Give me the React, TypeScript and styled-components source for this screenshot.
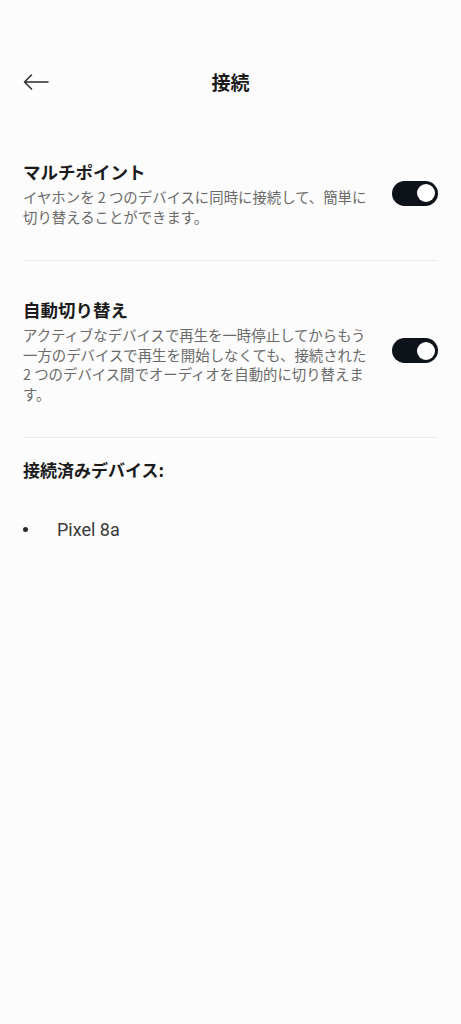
import React, { useState } from "react";
import styled, { createGlobalStyle } from "styled-components";

const GlobalStyle = createGlobalStyle`
  html, body {
    margin: 0;
    padding: 0;
    background: #fcfcfc;
  }
  body {
    font-family: "Noto Sans CJK JP", "Noto Sans", sans-serif;
    color: #1b1b1b;
    -webkit-font-smoothing: antialiased;
  }
`;

const Page = styled.div`
  min-height: 1024px;
  background: #fcfcfc;
`;

const Header = styled.header`
  margin-top: 50px;
  height: 64px;
  display: grid;
  grid-template-columns: 60px 1fr 60px;
  align-items: center;
  padding: 0 23px;
`;

const BackButton = styled.button`
  border: none;
  background: none;
  padding: 0;
  width: 26px;
  height: 18px;
  display: flex;
  align-items: center;
  cursor: pointer;
  color: #2b2b2b;
`;

const Title = styled.h1`
  margin: 0;
  text-align: center;
  font-size: 19px;
  font-weight: 700;
  line-height: 24px;
`;

const Content = styled.main`
  padding: 9px 23px 0;
`;

const Section = styled.section`
  display: flex;
  align-items: center;
  gap: 20px;
  padding: 37px 0 34px;
  border-bottom: 1px solid #ebebeb;
`;

const TextBlock = styled.div`
  flex: 1;
  min-width: 0;
`;

const SettingTitle = styled.h2`
  margin: 0;
  font-size: 17.5px;
  font-weight: 700;
  line-height: 24px;
  color: #1b1b1b;
`;

const Description = styled.p`
  margin: 3px 0 0;
  font-size: 14.4px;
  line-height: 19.5px;
  color: #6a6a6a;
`;

const Track = styled.button<{ $on: boolean }>`
  flex: none;
  width: 46px;
  height: 25px;
  border-radius: 13px;
  border: none;
  padding: 0 3.5px;
  display: flex;
  align-items: center;
  justify-content: ${(p) => (p.$on ? "flex-end" : "flex-start")};
  background: ${(p) => (p.$on ? "#0e131a" : "#c9cbcf")};
  cursor: pointer;
`;

const Knob = styled.span`
  width: 18px;
  height: 18px;
  border-radius: 50%;
  background: #ffffff;
`;

const DevicesTitle = styled.h3`
  margin: 0;
  padding-top: 20px;
  font-size: 17px;
  font-weight: 700;
  line-height: 24px;
  color: #1b1b1b;
`;

const DeviceList = styled.ul`
  list-style: none;
  margin: 0;
  padding: 35px 0 0;
`;

const DeviceItem = styled.li`
  display: flex;
  align-items: center;
  height: 24px;
  font-family: Roboto, "Noto Sans", sans-serif;
  font-size: 18px;
  color: #3a3a3a;

  &::before {
    content: "";
    width: 5px;
    height: 5px;
    border-radius: 50%;
    background: #2b2b2b;
    margin: 0 29px 0 0;
  }
`;

const Toggle = ({ initial }: { initial: boolean }) => {
  const [on, setOn] = useState(initial);
  return (
    <Track role="switch" aria-checked={on} $on={on} onClick={() => setOn(!on)}>
      <Knob />
    </Track>
  );
};

const settings = [
  {
    title: "マルチポイント",
    text: "イヤホンを 2 つのデバイスに同時に接続して、簡単に切り替えることができます。",
  },
  {
    title: "自動切り替え",
    text: "アクティブなデバイスで再生を一時停止してからもう一方のデバイスで再生を開始しなくても、接続された 2 つのデバイス間でオーディオを自動的に切り替えます。",
  },
];

export default function App() {
  return (
    <Page>
      <GlobalStyle />
      <Header>
        <BackButton aria-label="戻る">
          <svg width="26" height="16" viewBox="0 0 26 16" fill="none">
            <path
              d="M25 8H1.5M8.5 1L1.5 8l7 7"
              stroke="currentColor"
              strokeWidth="1.5"
              strokeLinecap="round"
              strokeLinejoin="round"
            />
          </svg>
        </BackButton>
        <Title>接続</Title>
        <span />
      </Header>
      <Content>
        {settings.map((s) => (
          <Section key={s.title}>
            <TextBlock>
              <SettingTitle>{s.title}</SettingTitle>
              <Description>{s.text}</Description>
            </TextBlock>
            <Toggle initial={true} />
          </Section>
        ))}
        <DevicesTitle>接続済みデバイス:</DevicesTitle>
        <DeviceList>
          <DeviceItem>Pixel 8a</DeviceItem>
        </DeviceList>
      </Content>
    </Page>
  );
}
